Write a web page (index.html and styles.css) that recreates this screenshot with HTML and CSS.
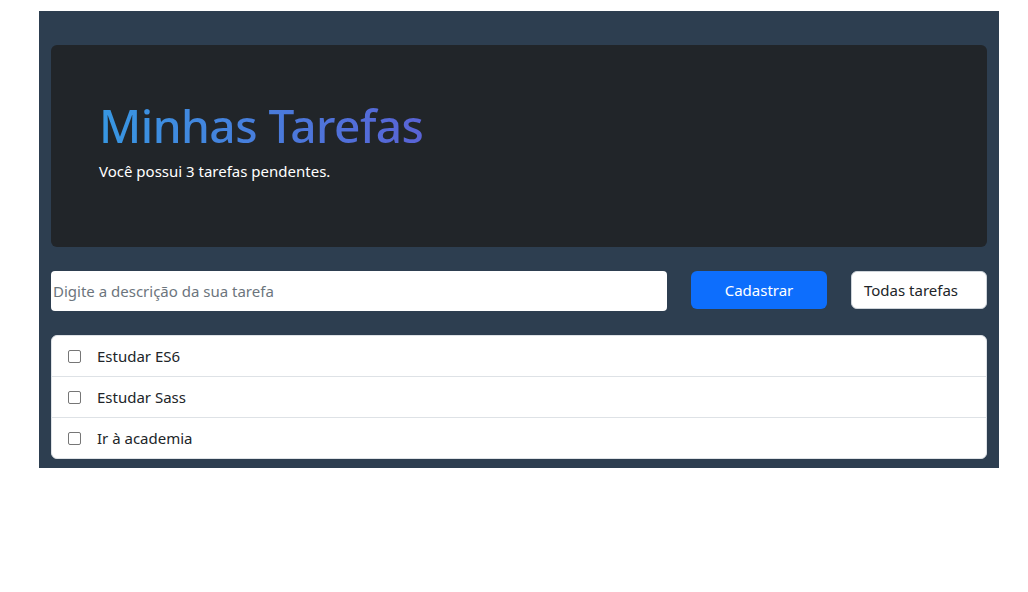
FILE: index.html
```html
<!DOCTYPE html>
<html lang="pt-BR">
<head>
<meta charset="utf-8">
<title>Minhas Tarefas</title>
<link rel="stylesheet" href="styles.css">
</head>
<body>
<div class="app">
  <header class="hero">
    <h1 class="hero-title">Minhas Tarefas</h1>
    <p class="hero-sub">Você possui 3 tarefas pendentes.</p>
  </header>
  <form class="toolbar">
    <input class="task-input" type="text" placeholder="Digite a descrição da sua tarefa">
    <button class="btn-primary" type="button">Cadastrar</button>
    <div class="filter">Todas tarefas</div>
  </form>
  <ul class="task-list">
    <li class="task"><span class="check"></span><span>Estudar ES6</span></li>
    <li class="task"><span class="check"></span><span>Estudar Sass</span></li>
    <li class="task"><span class="check"></span><span>Ir à academia</span></li>
  </ul>
</div>
</body>
</html>
```
FILE: styles.css
```css
* { box-sizing: border-box; }
html, body { margin: 0; padding: 0; background: #fff; }
body {
  font-family: "Noto Sans", "Open Sans", sans-serif;
  font-size: 16px;
  color: #212529;
  padding: 11px 0 0 39px;
}
.app {
  width: 960px;
  background: #2d3e50;
  padding: 34px 12px 9px;
}
.hero {
  background: #212529;
  border-radius: 6px;
  height: 202px;
  padding: 50px 48px 0;
}
.hero-title {
  margin: 0;
  font-size: 46px;
  font-weight: 500;
  line-height: 60px;
  letter-spacing: -0.5px;
  background: linear-gradient(90deg, #3797e2 0%, #5963d6 100%);
  -webkit-background-clip: text;
  background-clip: text;
  color: transparent;
  display: inline-block;
}
.hero-sub {
  margin: 4px 0 0;
  color: #fff;
  font-size: 15px;
  line-height: 24px;
}
.toolbar {
  display: flex;
  align-items: flex-start;
  gap: 24px;
  margin: 24px 0 24px;
}
.task-input {
  width: 616px;
  height: 40px;
  border: none;
  border-radius: 4px;
  padding: 0 2px;
  font: inherit;
  font-size: 15px;
  color: #212529;
  background: #fff;
}
.task-input::placeholder { color: #6c757d; }
.btn-primary {
  width: 136px;
  height: 38px;
  border: none;
  border-radius: 6px;
  background: #0d6efd;
  color: #fff;
  font: inherit;
  font-size: 15px;
}
.filter {
  width: 136px;
  height: 38px;
  border: 1px solid #ced4da;
  border-radius: 6px;
  background: #fff;
  font-size: 15px;
  line-height: 36px;
  padding-left: 12px;
}
.task-list {
  list-style: none;
  margin: 0;
  padding: 0;
  background: #fff;
  border: 1px solid #dee2e6;
  border-radius: 6px;
}
.task {
  height: 41px;
  display: flex;
  align-items: center;
  padding-left: 16px;
  font-size: 15px;
  border-top: 1px solid #dee2e6;
}
.task:first-child { border-top: none; height: 40px; }
.check {
  width: 13px;
  height: 13px;
  border: 1px solid #767676;
  border-radius: 2px;
  margin-right: 16px;
  flex: none;
}
```
